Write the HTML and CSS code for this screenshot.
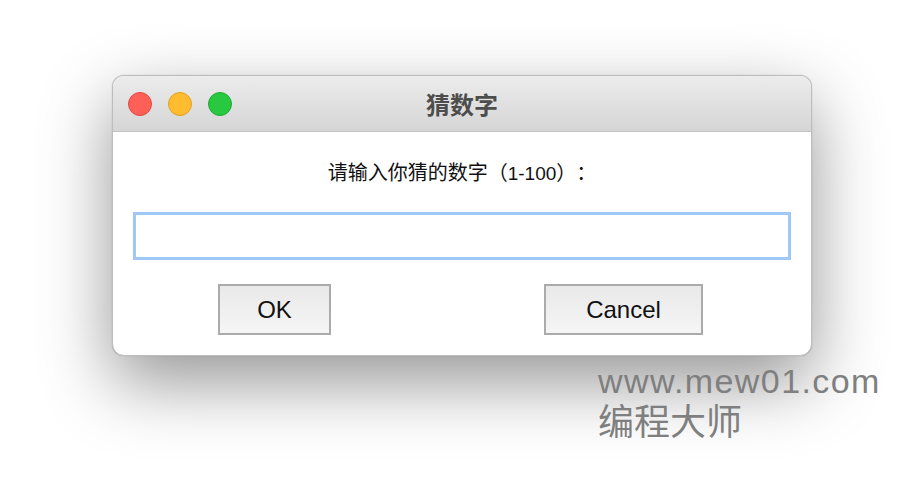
FILE: index.html
```html
<!DOCTYPE html>
<html lang="zh-CN">
<head>
  <meta charset="UTF-8" />
  <title>猜数字</title>
  <link rel="stylesheet" href="styles.css">
</head>
<body>

  <!-- Dialog window -->
  <div class="window">
    <div class="titlebar">
      <div class="lights">
        <span class="light red"></span>
        <span class="light yellow"></span>
        <span class="light green"></span>
      </div>
      <div class="title">猜数字</div>
    </div>
    <div class="content">
      <p class="prompt">请输入你猜的数字（<span class="num">1-100</span>）：</p>
      <input type="text" class="entry">
      <div class="buttons">
        <button class="btn ok">OK</button>
        <button class="btn cancel">Cancel</button>
      </div>
    </div>
  </div>

  <!-- Watermark -->
  <div class="watermark">
    <div class="wm-url">www.mew01.com</div>
    <div class="wm-name">编程大师</div>
  </div>

</body>
</html>
```

FILE: styles.css
```css
* {
  box-sizing: border-box;
  margin: 0;
  padding: 0;
}

body {
  background: #fff;
  width: 924px;
  height: 504px;
  overflow: hidden;
  position: relative;
  font-family: 'Liberation Sans', 'Noto Sans CJK SC', sans-serif;
}

.window {
  margin: 75px 0 0 112px;
  width: 700px;
  height: 281px;
  border: 1px solid #bdbdbd;
  border-radius: 12px;
  background: #fff;
  overflow: hidden;
  box-shadow: 0 26px 70px rgba(0,0,0,0.42), 0 0 1px rgba(0,0,0,0.3);
}

.titlebar {
  height: 56px;
  display: flex;
  align-items: center;
  position: relative;
  background: linear-gradient(#ececec, #d5d5d5);
  border-bottom: 1px solid #c2c2c2;
}

.lights {
  display: flex;
  gap: 16px;
  padding-left: 15px;
}

.light {
  width: 24px;
  height: 24px;
  border-radius: 50%;
  display: block;
}

.red { background: #fe5f57; border: 1px solid #e14942; }
.yellow { background: #febc2e; border: 1px solid #dfa023; }
.green { background: #28c840; border: 1px solid #1eab31; }

.title {
  position: absolute;
  left: 0;
  right: 0;
  text-align: center;
  font-family: 'Noto Sans CJK SC', sans-serif;
  font-weight: bold;
  font-size: 24px;
  color: #4d4d4d;
  pointer-events: none;
}

.content {
  padding: 0 20px;
}

.prompt {
  height: 53px;
  overflow: hidden;
  text-align: center;
  font-family: 'Noto Sans CJK SC', sans-serif;
  font-size: 20px;
  line-height: 26px;
  color: #111;
  padding-top: 27px;
  text-spacing-trim: space-all;
}

.num {
  font-family: 'Liberation Sans', sans-serif;
  font-size: 19px;
}

.entry {
  display: block;
  width: 658px;
  height: 48px;
  margin-top: 27px;
  border: 3px solid #9ec8f6;
  outline: none;
  background: #fff;
}

.buttons {
  display: flex;
  justify-content: space-between;
  padding: 0 88px 0 85px;
  margin-top: 24px;
}

.btn {
  height: 51px;
  border: 2px solid #ababab;
  background: linear-gradient(#e9e9e9, #f5f5f5);
  font-family: 'Liberation Sans', sans-serif;
  font-size: 24px;
  color: #111;
}

.ok { width: 113px; }
.cancel { width: 159px; }

.watermark {
  position: absolute;
  left: 598px;
  top: 362px;
  color: #7f7f7f;
}

.wm-url {
  font-family: 'Liberation Sans', sans-serif;
  font-size: 34px;
  line-height: 38px;
  letter-spacing: 1.4px;
}

.wm-name {
  font-family: 'Noto Sans CJK SC', sans-serif;
  font-size: 36px;
  line-height: 38px;
}
```
